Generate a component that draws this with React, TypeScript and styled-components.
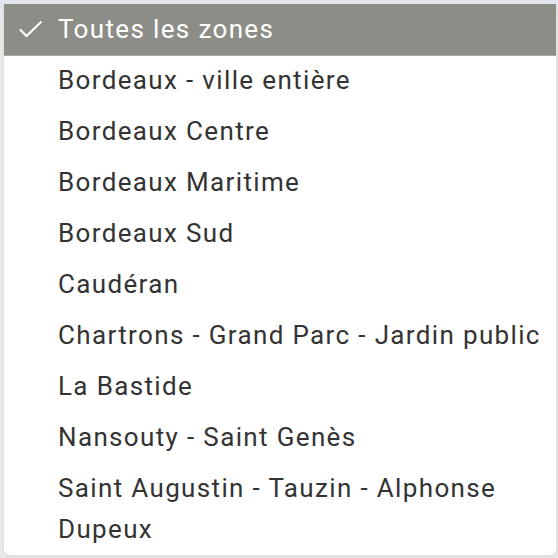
import * as React from 'react'
import styled, { createGlobalStyle } from 'styled-components'

const GlobalStyle = createGlobalStyle`
	html, body {
		margin: 0;
		padding: 0;
		background: #e9edf2;
	}
	body {
		font-family: Roboto, "Liberation Sans", sans-serif;
	}
`

const Page = styled.div`
	width: 558px;
	height: 558px;
	padding: 4px 2px 3px 4px;
	box-sizing: border-box;
	background: linear-gradient(#dfe6ef, #e9e9e9 20px);
`

const Menu = styled.ul`
	list-style: none;
	margin: 0;
	padding: 0;
	background: #fff;
	border-radius: 0 0 6px 6px;
	box-shadow: 0 0 0 1px #e2e2e2, 0 1px 3px rgba(0, 0, 0, 0.12);
	overflow: hidden;
`

const Option = styled.li<{ $selected?: boolean }>`
	position: relative;
	padding: 5px 6px 5px 54px;
	font-size: 26px;
	line-height: 41px;
	letter-spacing: 1.35px;
	color: ${p => (p.$selected ? '#fff' : '#333')};
	background: ${p => (p.$selected ? '#8d8d87' : 'transparent')};
	border-bottom: ${p => (p.$selected ? '1px solid #a9a9a4' : 'none')};
	margin-bottom: ${p => (p.$selected ? '-1px' : '0')};
`

const Check = styled.svg`
	position: absolute;
	left: 15px;
	top: 16px;
	width: 24px;
	height: 18px;
`

const zones = [
  'Toutes les zones',
  'Bordeaux - ville entière',
  'Bordeaux Centre',
  'Bordeaux Maritime',
  'Bordeaux Sud',
  'Caudéran',
  'Chartrons - Grand Parc - Jardin public',
  'La Bastide',
  'Nansouty - Saint Genès',
  'Saint Augustin - Tauzin - Alphonse Dupeux',
]

export default function App() {
  return (
    <Page>
      <GlobalStyle />
      <Menu>
        {zones.map((z, i) => (
          <Option key={z} $selected={i === 0}>
            {i === 0 && (
              <Check viewBox="0 0 24 18">
                <path d="M1 9.5 L7.5 16 L22.5 1.5" fill="none" stroke="#fff" strokeWidth="2.2" />
              </Check>
            )}
            {z}
          </Option>
        ))}
      </Menu>
    </Page>
  )
}
